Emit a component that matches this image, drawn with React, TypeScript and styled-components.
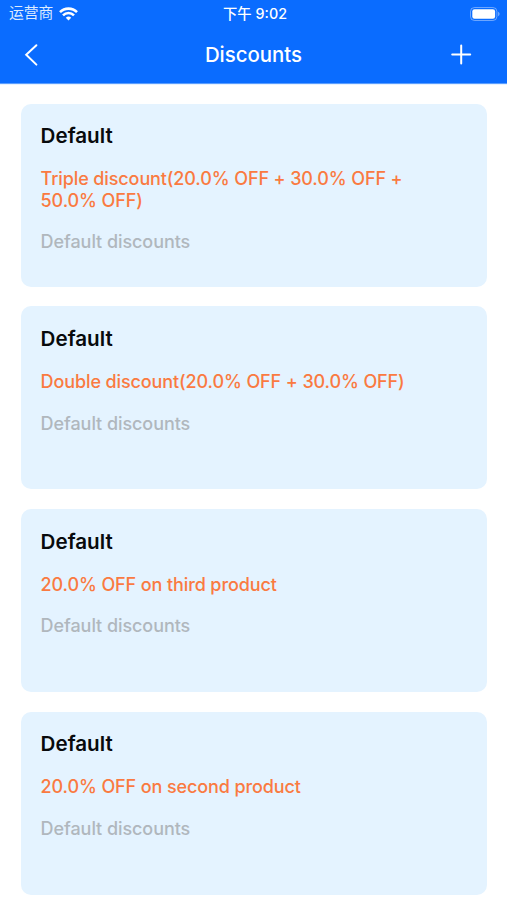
import React from "react";
import styled, { createGlobalStyle } from "styled-components";

const Global = createGlobalStyle`
  *{box-sizing:border-box}
  body{margin:0;background:#fff;font-family:Inter,"Noto Sans CJK SC",sans-serif}
`;
const Screen = styled.div`width:507px;height:900px;overflow:hidden;display:flex;flex-direction:column;background:#fff;`;
const Header = styled.header`height:84px;flex:none;background:#0a6cff;color:#fff;border-bottom:1px solid #5a9dff;box-shadow:0 1px #e6f2ff;`;
const StatusBar = styled.div`height:27px;display:grid;grid-template-columns:1fr auto 1fr;align-items:center;padding:0 6px 0 9px;line-height:27px;`;
const Carrier = styled.div`display:flex;align-items:center;gap:6px;font-size:14.8px;font-weight:400;color:#dcebff;`;
const Clock = styled.div`display:flex;gap:4px;font-weight:500;font-size:14.3px;`;
const Battery = styled.div`display:flex;justify-content:flex-end;`;
const NavBar = styled.div`height:56px;display:grid;grid-template-columns:60px 1fr 60px;align-items:center;padding:0 14px;`;
const Title = styled.h1`margin:0;text-align:center;font-size:20.4px;font-weight:500;line-height:26px;`;
const IconButton = styled.button`border:0;background:none;padding:0;color:inherit;display:flex;`;
const List = styled.main`display:flex;flex-direction:column;gap:19.7px;padding:19.7px 19.6px 0 20.6px;`;
const Card = styled.article`height:183px;flex:none;border-radius:10px;background:#e4f3ff;padding:20.6px 20px 0;display:flex;flex-direction:column;`;
const Name = styled.h2`margin:0;font-size:20.6px;line-height:24px;font-weight:600;color:#080a0c;`;
const Offer = styled.p`margin:20px 0 0;font-size:18px;line-height:21.6px;font-weight:500;letter-spacing:-.11px;color:#fa7a41;white-space:pre-line;`;
const Note = styled.p`margin:20px 0 0;font-size:18px;line-height:21.6px;font-weight:500;letter-spacing:-.07px;color:#b0b7bd;`;

const offers = [
  "Triple discount(20.0% OFF + 30.0% OFF +\n50.0% OFF)",
  "Double discount(20.0% OFF + 30.0% OFF)",
  "20.0% OFF on third product",
  "20.0% OFF on second product",
];

export default function App() {
  return (
    <Screen>
      <Global />
      <Header>
        <StatusBar>
          <Carrier>运营商
            <svg width="19" height="14" viewBox="0 0 19 14" fill="none" stroke="#fff" strokeWidth="2.6"><path d="M1 5.2a12 12 0 0 1 17 0M4 8.3a7.8 7.8 0 0 1 11 0"/><path d="M6.8 10.8a3.9 3.9 0 0 1 5.4 0L9.5 13.5z" fill="#fff" stroke="none"/></svg>
          </Carrier>
          <Clock><span>下午</span><span>9:02</span></Clock>
          <Battery>
            <svg width="31" height="14" viewBox="0 0 31 14"><rect x=".5" y=".5" width="26.4" height="13" rx="4" fill="none" stroke="#fff" opacity=".4"/><rect x="2.3" y="2.3" width="22.8" height="9.4" rx="2.2" fill="#fff"/><path d="M28 4.8c2.2.8 2.2 3.6 0 4.4z" fill="#fff" opacity=".4"/></svg>
          </Battery>
        </StatusBar>
        <NavBar>
          <IconButton aria-label="Back"><svg width="34" height="28" fill="none" stroke="#fff" strokeWidth="2" strokeLinecap="round"><path d="M22.4 4.2 12.2 13.8 22.4 23.6"/></svg></IconButton>
          <Title>Discounts</Title>
          <IconButton aria-label="Add"><svg width="40" height="28" fill="none" stroke="#fff" strokeWidth="2" strokeLinecap="round"><path d="M28.2 4.5v18M19.2 13.5h18"/></svg></IconButton>
        </NavBar>
      </Header>
      <List>
        {offers.map((offer) => (
          <Card key={offer}><Name>Default</Name><Offer>{offer}</Offer><Note>Default discounts</Note></Card>
        ))}
      </List>
    </Screen>
  );
}
